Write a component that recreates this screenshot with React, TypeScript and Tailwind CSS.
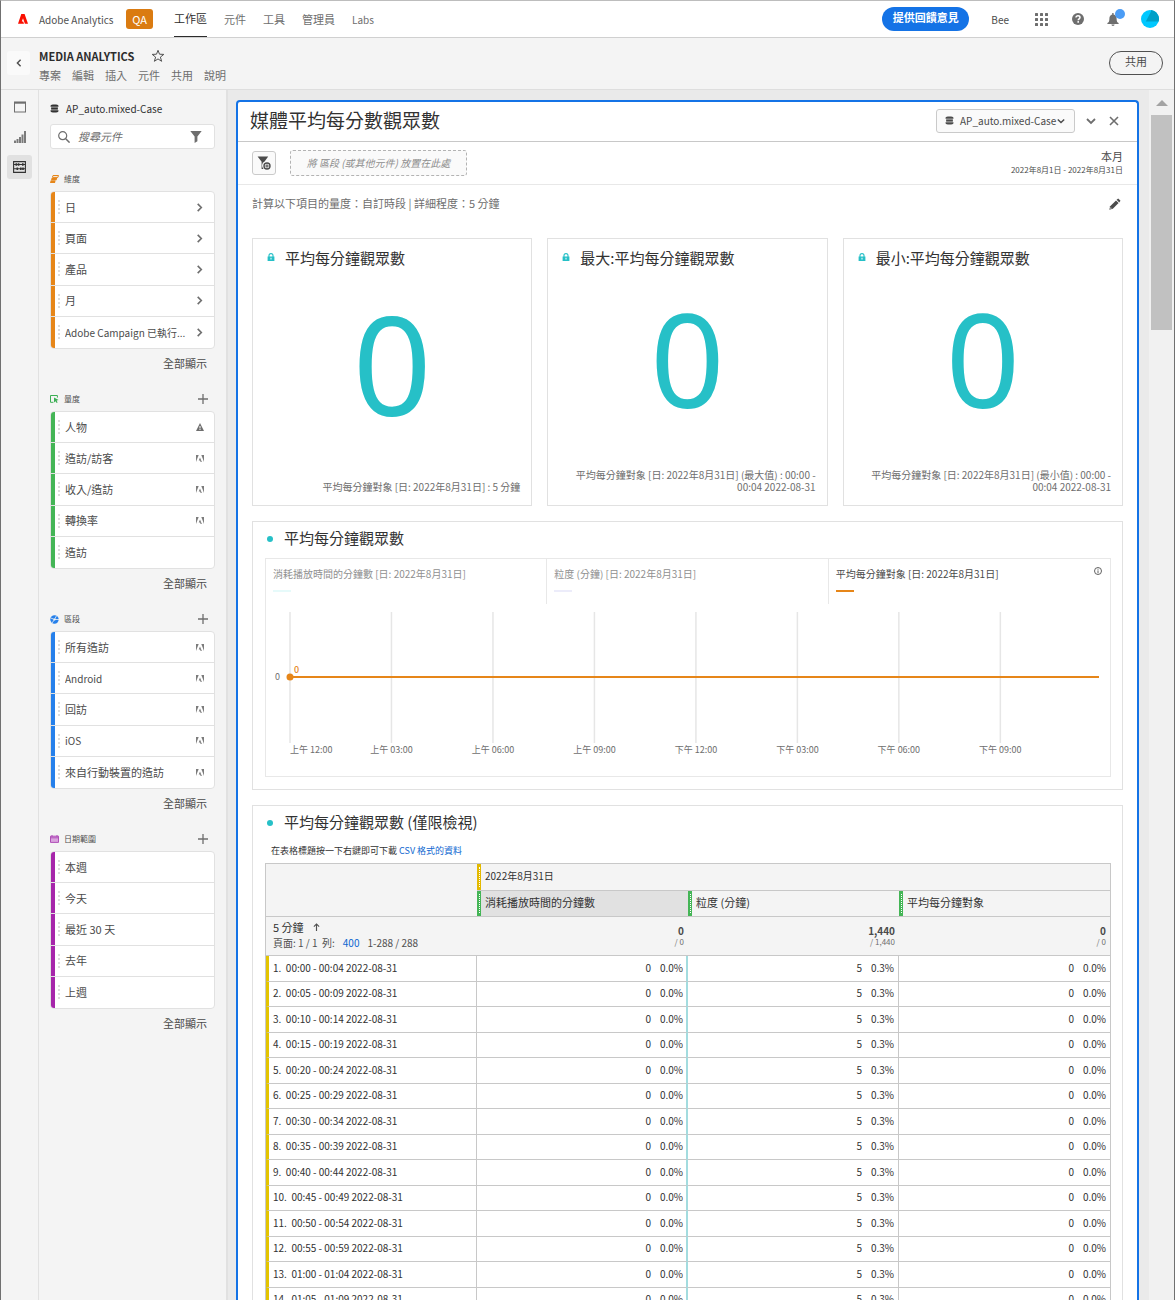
import React from 'react';

type IconProps = { className?: string };

const AdobeLetterLogo = ({ className = '' }: IconProps) => (
  <svg viewBox="0 0 20 20" className={className} fill="currentColor" aria-hidden="true">
    <path d="M6.6 0H13.2L20 19.6H13.8L10 8.6L7.6 15H10.4L12 19.6H0Z" />
  </svg>
);

const AdobeLogo = ({ className = '' }: IconProps) => (
  <svg viewBox="0 0 30 26" className={className} fill="currentColor" aria-hidden="true">
    <path d="M20 0H30V26Z" />
    <path d="M10 0H0V26Z" />
    <path d="M15 9.6L22 26H17.4L15.3 20.8H10.2Z" />
  </svg>
);

const Database = ({ className = '' }: IconProps) => (
  <svg viewBox="0 0 16 16" className={className} fill="currentColor" aria-hidden="true">
    <path d="M1 3C1 1.6 4 .8 8 .8s7 .8 7 2.2V5H1z" />
    <path d="M2 6h12v4H2z" />
    <path d="M1 11h14v2c0 1.4-3 2.2-7 2.2S1 14.4 1 13z" />
  </svg>
);

const ChevronRight = ({ className = '' }: IconProps) => (
  <svg viewBox="0 0 10 10" className={className} fill="none" stroke="currentColor" strokeWidth="1.8" aria-hidden="true">
    <path d="M3 1L7 5L3 9" />
  </svg>
);

const ChevronLeft = ({ className = '' }: IconProps) => (
  <svg viewBox="0 0 10 10" className={className} fill="none" stroke="currentColor" strokeWidth="1.8" aria-hidden="true">
    <path d="M7 1L3 5L7 9" />
  </svg>
);

const ChevronDown = ({ className = '' }: IconProps) => (
  <svg viewBox="0 0 10 10" className={className} fill="none" stroke="currentColor" strokeWidth="1.8" aria-hidden="true">
    <path d="M1 3L5 7L9 3" />
  </svg>
);

const Cross = ({ className = '' }: IconProps) => (
  <svg viewBox="0 0 10 10" className={className} fill="none" stroke="currentColor" strokeWidth="1.6" aria-hidden="true">
    <path d="M1 1L9 9M9 1L1 9" />
  </svg>
);

const Plus = ({ className = '' }: IconProps) => (
  <svg viewBox="0 0 10 10" className={className} fill="none" stroke="currentColor" strokeWidth="1.3" aria-hidden="true">
    <path d="M5 0V10M0 5H10" />
  </svg>
);

const Funnel = ({ className = '' }: IconProps) => (
  <svg viewBox="0 0 12 12" className={className} fill="currentColor" aria-hidden="true">
    <path d="M.3 0H11.7L7.4 5.4V10.2L4.6 12V5.4Z" />
  </svg>
);

const FunnelAdd = ({ className = '' }: IconProps) => (
  <svg viewBox="0 0 14 14" className={className} fill="currentColor" aria-hidden="true">
    <path d="M.6 .6H11.2L7.6 5.6A4.4 4.4 0 0 0 6.6 13L4.6 13V5.8Z" />
    <circle cx="10" cy="10" r="3" fill="none" stroke="currentColor" strokeWidth="1.4" />
    <path d="M9.5 8.2h1v1.3h1.3v1h-1.3v1.3h-1v-1.3H8.2v-1h1.3z" />
  </svg>
);

const Magnifier = ({ className = '' }: IconProps) => (
  <svg viewBox="0 0 12 12" className={className} fill="none" stroke="currentColor" strokeWidth="1.2" aria-hidden="true">
    <circle cx="4.7" cy="4.7" r="4" />
    <path d="M7.7 7.7L11.6 11.6" strokeWidth="1.5" />
  </svg>
);

const Star = ({ className = '' }: IconProps) => (
  <svg viewBox="0 0 14 14" className={className} fill="none" stroke="currentColor" strokeWidth="1" strokeLinejoin="miter" aria-hidden="true">
    <path d="M7 1.3L8.5 5.2L12.8 5.4L9.4 8.1L10.6 12.3L7 9.9L3.4 12.3L4.6 8.1L1.2 5.4L5.5 5.2Z" />
  </svg>
);

const Lock = ({ className = '' }: IconProps) => (
  <svg viewBox="0 0 8 8" className={className} aria-hidden="true">
    <path d="M2 4V2.6a2 2 0 0 1 4 0V4" fill="none" stroke="currentColor" strokeWidth="1.1" />
    <path d="M.6 3.4H7.4V8H.6zM3.5 4.7v1.8h1V4.7z" fill="currentColor" fillRule="evenodd" />
  </svg>
);

const Warning = ({ className = '' }: IconProps) => (
  <svg viewBox="0 0 8 8" className={className} fill="currentColor" aria-hidden="true">
    <path fillRule="evenodd" d="M4 0L8 8H0ZM3.5 3v2.4h1V3zM3.5 6v1h1V6z" />
  </svg>
);

const Bell = ({ className = '' }: IconProps) => (
  <svg viewBox="0 0 12 13" className={className} fill="currentColor" aria-hidden="true">
    <path d="M5.2 0h1.4v1.4C8.6 1.8 9.6 3.4 9.6 5.4c0 3 .6 3.8 2 4.6v1H.4v-1c1.4-.8 2-1.6 2-4.6 0-2 1-3.6 2.8-4z" />
    <path d="M4.4 11.6h3.2a1.6 1.4 0 0 1-3.2 0z" />
  </svg>
);

const Pencil = ({ className = '' }: IconProps) => (
  <svg viewBox="0 0 12 12" className={className} fill="currentColor" aria-hidden="true">
    <path d="M9.2.5L11.5 2.8L10.2 4.4L7.6 1.8Z" />
    <path d="M7 2.4L9.6 5L3.8 10.8L.3 11.7L1.2 8.2Z" />
    <path d="M1.7 9.2L2.8 10.3L1.2 10.8Z" fill="#fff" />
  </svg>
);

const Apps = ({ className = '' }: IconProps) => (
  <svg viewBox="0 0 13 13" className={className} fill="currentColor" aria-hidden="true">
    {[0, 5, 10].map((y) => [0, 5, 10].map((x) => <rect key={`${x}-${y}`} x={x} y={y} width="3" height="3" rx=".5" />))}
  </svg>
);

const Help = ({ className = '' }: IconProps) => (
  <svg viewBox="0 0 12 12" className={className} aria-hidden="true">
    <circle cx="6" cy="6" r="6" fill="currentColor" />
    <path d="M4 4.6C4 3.4 4.9 2.8 6 2.8s2 .6 2 1.7C8 5.8 6.2 5.8 6.2 7.2" fill="none" stroke="#fff" strokeWidth="1.5" />
    <rect x="5.4" y="8.1" width="1.6" height="1.6" fill="#fff" />
  </svg>
);

const PanelIcon = ({ className = '' }: IconProps) => (
  <svg viewBox="0 0 12 12" className={className} aria-hidden="true">
    <rect x=".5" y="1.2" width="11" height="9.8" fill="none" stroke="currentColor" />
    <rect x="0" y=".7" width="12" height="2" fill="currentColor" />
  </svg>
);

const Bars = ({ className = '' }: IconProps) => (
  <svg viewBox="0 0 12 12" className={className} fill="currentColor" aria-hidden="true">
    <path d="M0 9.5h2V12H0zM2.5 8h2v4h-2zM5 6h2v6H5zM7.5 3.5h2V12h-2zM10 0h2v12h-2z" />
  </svg>
);

const Abacus = ({ className = '' }: IconProps) => (
  <svg viewBox="0 0 13 12" className={className} aria-hidden="true">
    <path d="M.6.6H12.4V11.4H.6ZM.6 3.5H12.4M.6 7.7H12.4" fill="none" stroke="currentColor" strokeWidth="1.1" />
    <path d="M2.5 2.2h1.6v2.6H2.5zM4.8 2.2h1.6v2.6H4.8zM9 2.2h1.6v2.6H9zM3.5 6.4h1.6V9H3.5zM7 6.4h1.6V9H7zM9.2 6.4h1.6V9H9.2z" fill="currentColor" />
  </svg>
);

const DimensionIcon = ({ className = '' }: IconProps) => (
  <svg viewBox="0 0 9 8" className={className} aria-hidden="true">
    <path d="M3 .5H8.5L7.9 2.4H2.4Z" fill="none" stroke="currentColor" />
    <path d="M1.6 2.9H7.2L6.6 5.2H1ZM.6 5.6H5.6L5 8H0Z" fill="currentColor" />
  </svg>
);

const MetricIcon = ({ className = '' }: IconProps) => (
  <svg viewBox="0 0 9 8" className={className} aria-hidden="true">
    <path d="M7.4 2.6V.5H.5V7.3H3.4" fill="none" stroke="currentColor" />
    <path d="M4 2.4L8.6 5L6.6 5.6L7.6 7.4L6.6 8L5.6 6.2L4 7.6Z" fill="currentColor" />
  </svg>
);

const SegmentIcon = ({ className = '' }: IconProps) => (
  <svg viewBox="0 0 9 9" className={className} aria-hidden="true">
    <circle cx="4.5" cy="4.5" r="4.2" fill="currentColor" />
    <path d="M4.5 4.5L6.5 .8M4.5 4.5H9M4.5 4.5L2 8M4.5 4.5L.8 3" stroke="#f4f4f4" strokeWidth=".8" />
    <circle cx="4.5" cy="4.5" r="1.1" fill="#f4f4f4" />
  </svg>
);

const DateIcon = ({ className = '' }: IconProps) => (
  <svg viewBox="0 0 9 8" className={className} aria-hidden="true">
    <path d="M.5 1.2H8.5V7.4H.5Z" fill="#d9a3dd" stroke="currentColor" />
    <path d="M2 0V2M7 0V2M.5 2.8H8.5" stroke="currentColor" />
  </svg>
);

const Info = ({ className = '' }: IconProps) => (
  <svg viewBox="0 0 8 8" className={className} aria-hidden="true">
    <circle cx="4" cy="4" r="3.5" fill="none" stroke="currentColor" strokeWidth=".9" />
    <path d="M4 1.8V2.7M4 3.4V6.2" stroke="currentColor" strokeWidth=".9" />
  </svg>
);

type RowIcon = 'chevron' | 'adobe' | 'warning' | 'none';
type Item = { label: string; icon: RowIcon; latin?: boolean };
type Section = {
  title: string;
  icon: React.ReactNode;
  bar: string;
  addable: boolean;
  items: Item[];
};

const sections: Section[] = [
  {
    title: '維度',
    icon: <DimensionIcon className="h-2 w-[9px] text-[#e68619]" />,
    bar: 'bg-[#e68619]',
    addable: false,
    items: [
      { label: '日', icon: 'chevron' },
      { label: '頁面', icon: 'chevron' },
      { label: '產品', icon: 'chevron' },
      { label: '月', icon: 'chevron' },
      { label: 'Adobe Campaign 已執行...', icon: 'chevron', latin: true },
    ],
  },
  {
    title: '量度',
    icon: <MetricIcon className="h-2 w-[9px] text-[#3bae53]" />,
    bar: 'bg-[#44b556]',
    addable: true,
    items: [
      { label: '人物', icon: 'warning' },
      { label: '造訪/訪客', icon: 'adobe' },
      { label: '收入/造訪', icon: 'adobe' },
      { label: '轉換率', icon: 'adobe' },
      { label: '造訪', icon: 'none' },
    ],
  },
  {
    title: '區段',
    icon: <SegmentIcon className="h-[9px] w-[9px] text-[#2680eb]" />,
    bar: 'bg-[#2680eb]',
    addable: true,
    items: [
      { label: '所有造訪', icon: 'adobe' },
      { label: 'Android', icon: 'adobe', latin: true },
      { label: '回訪', icon: 'adobe' },
      { label: 'iOS', icon: 'adobe', latin: true },
      { label: '來自行動裝置的造訪', icon: 'adobe' },
    ],
  },
  {
    title: '日期範圍',
    icon: <DateIcon className="h-2 w-[9px] text-[#b04fb8]" />,
    bar: 'bg-[#a626aa]',
    addable: true,
    items: [
      { label: '本週', icon: 'none' },
      { label: '今天', icon: 'none' },
      { label: '最近 30 天', icon: 'none' },
      { label: '去年', icon: 'none' },
      { label: '上週', icon: 'none' },
    ],
  },
];

const RowMark = ({ kind }: { kind: RowIcon }) => {
  if (kind === 'chevron') return <ChevronRight className="h-[9px] w-[9px] shrink-0 text-[#6e6e6e]" />;
  if (kind === 'adobe') return <AdobeLogo className="h-[7px] w-2 shrink-0 text-[#7c7c7c]" />;
  if (kind === 'warning') return <Warning className="h-2 w-2 shrink-0 text-[#6e6e6e]" />;
  return null;
};

const ComponentSection = ({ section }: { section: Section }) => (
  <section className="h-[220px]">
    <div className="flex h-6 items-center">
      {section.icon}
      <h3 className="ml-[5px] flex-1 text-[8px] text-[#505050]">{section.title}</h3>
      {section.addable && (
        <button type="button" aria-label={`新增${section.title}`} className="mr-[7px]">
          <Plus className="h-[10px] w-[10px] text-[#6e6e6e]" />
        </button>
      )}
    </div>
    <ul className="grid h-[158px] auto-rows-fr divide-y divide-[#e1e1e1] overflow-hidden rounded-sm border border-[#e1e1e1] bg-white">
      {section.items.map((item) => (
        <li key={item.label} className="flex items-stretch">
          <span className={`w-1 ${section.bar}`} />
          <button type="button" className="flex min-w-0 flex-1 items-center pr-[10px] text-left text-[#4b4b4b]">
            <span className="ml-[3px] h-[14px] border-l-2 border-dotted border-[#dcdcdc]" />
            <span className={item.latin ? 'ml-[5px] flex-1 truncate text-[10px]' : 'ml-[5px] flex-1 truncate text-[11px]'}>{item.label}</span>
            <RowMark kind={item.icon} />
          </button>
        </li>
      ))}
    </ul>
    <div className="flex h-7 items-center justify-end pr-2">
      <button type="button" className="text-[11px] text-[#4b4b4b]">全部顯示</button>
    </div>
  </section>
);

const TopBar = () => (
  <header className="flex h-[37px] shrink-0 items-center border-b border-[#d0d0d0] bg-white pr-[15px] pl-[17px] text-[11px] text-[#6e6e6e]">
    <AdobeLetterLogo className="h-[10px] w-[10px] text-[#fa0f00]" />
    <span className="ml-[11px] w-[75px] text-[10px] whitespace-nowrap text-[#505050]">Adobe Analytics</span>
    <span className="ml-3 flex h-5 w-[27px] items-center justify-center rounded-[3px] bg-[#da7b11] text-[11px] text-white">QA</span>
    <nav className="ml-[21px] flex h-full items-stretch gap-[17px]">
      <a href="#workspace" className="flex items-center border-b border-[#2c2c2c] text-[#2c2c2c]">工作區</a>
      <a href="#components" className="flex items-center">元件</a>
      <a href="#tools" className="flex items-center">工具</a>
      <a href="#admin" className="flex items-center">管理員</a>
      <a href="#labs" className="flex items-center text-[10px]">Labs</a>
    </nav>
    <button type="button" className="ml-auto flex h-6 w-[87px] items-center justify-center rounded-full bg-[#1473e6] pb-1 text-[11px] font-bold text-white">
      提供回饋意見
    </button>
    <span className="ml-[22px] text-[10px] text-[#4b4b4b]">Bee</span>
    <button type="button" aria-label="應用程式" className="ml-[26px]"><Apps className="h-[13px] w-[13px]" /></button>
    <button type="button" aria-label="說明" className="ml-6"><Help className="h-3 w-3" /></button>
    <button type="button" aria-label="通知" className="relative ml-[23px]">
      <Bell className="h-[13px] w-3" />
      <span className="absolute -top-1 left-2 h-[10px] w-[10px] rounded-full bg-[#4b9cf5]" />
    </button>
    <button type="button" aria-label="個人資料" className="ml-[22px]">
      <svg viewBox="0 0 18 18" className="h-[18px] w-[18px]" aria-hidden="true">
        <circle cx="9" cy="9" r="9" fill="#00c8ff" />
        <path d="M10 1.4L4.8 11.4H17.7A9 9 0 0 0 10 .1Z" fill="#00a0c8" />
      </svg>
    </button>
  </header>
);

const ProjectBar = () => (
  <div className="flex h-[52px] shrink-0 items-start border-b border-[#dedede] bg-[#f4f4f4]">
    <button type="button" aria-label="返回" className="mt-[13px] ml-[6px] flex h-6 w-[23px] items-center justify-center rounded-[3px] bg-[#fafafa]">
      <ChevronLeft className="h-2 w-2 text-[#505050]" />
    </button>
    <div className="ml-[9px] pt-[10px]">
      <div className="flex h-4 items-center">
        <h1 className="text-[11px] font-bold text-[#2c2c2c]">MEDIA ANALYTICS</h1>
        <button type="button" aria-label="加到我的最愛" className="ml-[17px]"><Star className="h-[14px] w-[14px] text-[#505050]" /></button>
      </div>
      <nav className="mt-[3px] flex h-4 items-center gap-[11px] text-[11px] text-[#6e6e6e]">
        {['專案', '編輯', '插入', '元件', '共用', '說明'].map((m) => (
          <button key={m} type="button">{m}</button>
        ))}
      </nav>
    </div>
    <button type="button" className="mt-[13px] mr-[11px] ml-auto flex h-6 w-[54px] items-center justify-center rounded-full border border-[#505050] pb-[3px] text-[11px] text-[#4b4b4b]">
      共用
    </button>
  </div>
);

const Rail = () => (
  <aside className="flex w-[38px] shrink-0 flex-col items-center gap-[6px] border-r border-[#e1e1e1] bg-[#f4f4f4] pt-[5px]">
    <button type="button" aria-label="面板" className="flex h-6 w-[25px] items-center justify-center rounded-[3px]">
      <PanelIcon className="h-3 w-3 text-[#6e6e6e]" />
    </button>
    <button type="button" aria-label="視覺效果" className="flex h-6 w-[25px] items-center justify-center rounded-[3px]">
      <Bars className="h-3 w-3 text-[#7a7a7a]" />
    </button>
    <button type="button" aria-label="元件" className="flex h-6 w-[25px] items-center justify-center rounded-[3px] bg-[#e1e1e1]">
      <Abacus className="h-3 w-[13px] text-[#323232]" />
    </button>
  </aside>
);

const Sidebar = () => (
  <aside className="w-[189px] shrink-0 border-r-2 border-[#e1e1e1] bg-[#f4f4f4] px-[11px]">
    <div className="flex h-[34px] items-center pt-[3px] text-[10px] text-[#323232]">
      <Database className="h-[9px] w-[9px]" />
      <span className="ml-[7px]">AP_auto.mixed-Case</span>
    </div>
    <div className="mb-[18px] flex h-[25px] items-center rounded-[3px] border border-[#e1e1e1] bg-white pr-3 pl-[7px]">
      <Magnifier className="h-3 w-3 text-[#6e6e6e]" />
      <input
        type="search"
        aria-label="搜尋元件"
        placeholder="搜尋元件"
        className="ml-2 min-w-0 flex-1 bg-transparent text-[11px] italic outline-none placeholder:text-[#6e6e6e]"
      />
      <button type="button" aria-label="篩選"><Funnel className="h-3 w-3 text-[#6e6e6e]" /></button>
    </div>
    {sections.map((s) => (
      <ComponentSection key={s.title} section={s} />
    ))}
  </aside>
);

const SummaryCard = ({ title, caption, big }: { title: string; caption: React.ReactNode; big: boolean }) => (
  <article className="flex h-[268px] flex-col border border-[#e1e1e1]">
    <div className="flex h-[38px] items-center pl-[14px]">
      <Lock className="mb-[2px] h-2 w-2 text-[#26c0c7]" />
      <h3 className="ml-[10px] text-[15px] text-[#323232]">{title}</h3>
    </div>
    <div
      className={
        big
          ? "flex h-[170px] items-center justify-center font-['Noto_Sans',sans-serif] text-[138px] leading-none text-[#26c0c7]"
          : "flex h-[162px] items-center justify-center font-['Noto_Sans',sans-serif] text-[130px] leading-none text-[#26c0c7]"
      }
    >
      0
    </div>
    <p className="mt-auto pr-[11px] pb-3 pl-5 text-right text-[10px] leading-3 text-[#6e6e6e]">{caption}</p>
  </article>
);

const hours = ['上午 12:00', '上午 03:00', '上午 06:00', '上午 09:00', '下午 12:00', '下午 03:00', '下午 06:00', '下午 09:00'];

const legends = [
  { label: '消耗播放時間的分鐘數 [日: 2022年8月31日]', swatch: 'bg-[#e6fafa]', text: 'text-[#909090]' },
  { label: '粒度 (分鐘) [日: 2022年8月31日]', swatch: 'bg-[#ececfa]', text: 'text-[#909090]' },
  { label: '平均每分鐘對象 [日: 2022年8月31日]', swatch: 'bg-[#e68619]', text: 'text-[#4b4b4b]' },
];

const CardHeading = ({ children }: { children: React.ReactNode }) => (
  <div className="flex h-9 items-center pb-[3px] pl-[14px]">
    <span className="h-[6px] w-[6px] rounded-full bg-[#26c0c7]" />
    <h3 className="ml-[11px] text-[15px] text-[#323232]">{children}</h3>
  </div>
);

const ChartCard = () => (
  <article className="mt-[15px] border border-[#e1e1e1] pb-3">
    <CardHeading>平均每分鐘觀眾數</CardHeading>
    <div className="mr-[11px] ml-3 h-[219px] border border-[#e8e8e8]">
      <div className="grid h-[45px] grid-cols-3 divide-x divide-[#e8e8e8]">
        {legends.map((l, i) => (
          <div key={l.label} className="flex items-start justify-between pr-2 pl-[7px]">
            <button type="button" className={`pt-[7px] text-left text-[10px] leading-4 ${l.text}`}>
              {l.label}
              <span className={`mt-2 block h-[2px] w-[18px] ${l.swatch}`} />
            </button>
            {i === 2 && <Info className="mt-2 h-2 w-2 text-[#505050]" />}
          </div>
        ))}
      </div>
      <div className="pt-2 pr-[11px] pl-6">
        <svg width="100%" height="148" className="block overflow-visible" role="img" aria-label="平均每分鐘觀眾數">
          {hours.map((h, i) => {
            const x = `${((i * 180) / 1435) * 100}%`;
            return (
              <g key={h}>
                <line x1={x} x2={x} y1="0" y2="131" stroke="#e6e6e6" strokeWidth="1.5" />
                <text x={x} y="141" textAnchor={i === 0 ? 'start' : 'middle'} fontSize="9" fill="#6e6e6e">{h}</text>
              </g>
            );
          })}
          <line x1="0" x2="100%" y1="65" y2="65" stroke="#e68619" strokeWidth="2" />
          <circle cx="0" cy="65" r="3.5" fill="#e68619" />
          <text x="-10" y="68" textAnchor="end" fontSize="9" fill="#6e6e6e">0</text>
          <text x="4" y="61" fontSize="9" fontWeight="500" fill="#e68619">0</text>
        </svg>
      </div>
    </div>
  </article>
);

const slots = Array.from({ length: 16 }, (_, i) => {
  const stamp = (m: number) => `${String(Math.floor(m / 60)).padStart(2, '0')}:${String(m % 60).padStart(2, '0')}`;
  return `${stamp(i * 5)} - ${stamp(i * 5 + 4)} 2022-08-31`;
});

const pairEdges = {
  teal: 'border-r-2 border-b border-[#c8c8c8] border-r-[#a3dcdf] p-0 pr-[3px] pb-[2px]',
  gray: 'border-r border-b border-[#c8c8c8] p-0 pr-1 pb-[2px]',
  none: 'border-b border-[#c8c8c8] p-0 pr-1 pb-[2px]',
};

const Pair = ({ value, pct, edge }: { value: string; pct: string; edge: keyof typeof pairEdges }) => (
  <td className={pairEdges[edge]}>
    <div className="flex justify-end">
      <span>{value}</span>
      <span className="w-8 text-right">{pct}</span>
    </div>
  </td>
);

const ColumnHead = ({ children, tone, active = false }: { children: React.ReactNode; tone: string; active?: boolean }) => (
  <div className={active ? 'flex h-full items-stretch bg-[#e1e1e1]' : 'flex h-full items-stretch'}>
    <span className={`flex w-1 justify-center ${tone}`}>
      <span className="my-[3px] border-l border-dotted border-white" />
    </span>
    <span className="flex items-center pb-[3px] pl-1">{children}</span>
  </div>
);

const Total = ({ value }: { value: string }) => (
  <td className="border-b border-[#c8c8c8] p-0 pr-1 text-right align-middle">
    <div className="leading-3 font-bold text-[#4b4b4b]">{value}</div>
    <div className="text-[8px] leading-[10px] text-[#6e6e6e]">/ {value}</div>
  </td>
);

const TableCard = () => (
  <article className="mt-[15px] border border-[#e1e1e1] pb-3">
    <CardHeading>平均每分鐘觀眾數 (僅限檢視)</CardHeading>
    <p className="flex h-[21px] items-center pb-1 pl-[18px] text-[9px] text-[#323232]">
      在表格標題按一下右鍵即可下載&nbsp;<a href="#csv" className="text-[#0d66d0]">CSV 格式的資料</a>
    </p>
    <div className="mr-[11px] ml-3">
      <table className="w-full table-fixed border-separate border-spacing-0 border border-[#c8c8c8] text-[10px] leading-3 text-[#323232]">
        <thead className="bg-[#f4f4f4] text-left">
          <tr className="h-[27px]">
            <th rowSpan={2} className="border-b border-[#c8c8c8] p-0" aria-label="時段" />
            <th colSpan={3} className="h-[27px] border-b border-[#c8c8c8] p-0 text-[10px] font-normal">
              <ColumnHead tone="bg-[#e3b900]">2022年8月31日</ColumnHead>
            </th>
          </tr>
          <tr className="h-[26px] text-[11px]">
            <th className="h-[26px] border-b border-[#c8c8c8] p-0 font-normal"><ColumnHead tone="bg-[#44b556]" active>消耗播放時間的分鐘數</ColumnHead></th>
            <th className="h-[26px] border-b border-[#c8c8c8] p-0 font-normal"><ColumnHead tone="bg-[#44b556]">粒度 (分鐘)</ColumnHead></th>
            <th className="h-[26px] border-b border-[#c8c8c8] p-0 font-normal"><ColumnHead tone="bg-[#44b556]">平均每分鐘對象</ColumnHead></th>
          </tr>
          <tr className="h-[39px] bg-[#f4f4f4]">
            <td className="border-b border-[#c8c8c8] p-0 pb-[3px] pl-[7px]">
              <div className="flex items-center gap-[9px] text-[11px] leading-4">
                <span>5 分鐘</span>
                <svg viewBox="0 0 8 9" className="h-2 w-[7px]" fill="none" stroke="#505050" strokeWidth="1.3" aria-hidden="true"><path d="M4 9V1M1 4L4 1L7 4" /></svg>
              </div>
              <div className="flex gap-2 leading-4 whitespace-nowrap text-[#505050]">
                <span>頁面: 1 / 1&nbsp; 列:</span>
                <a href="#rows" className="text-[#0d66d0]">400</a>
                <span>1-288 / 288</span>
              </div>
            </td>
            <Total value="0" />
            <Total value="1,440" />
            <Total value="0" />
          </tr>
        </thead>
        <tbody>
          {slots.map((slot, i) => (
            <tr key={slot} className="odd:h-[26px] even:h-[25px]">
              <td className="border-r border-b border-l-[3px] border-[#c8c8c8] border-l-[#e3c400] p-0 pb-[2px] pl-1">
                {i + 1}.&nbsp; {slot}
              </td>
              <Pair value="0" pct="0.0%" edge="teal" />
              <Pair value="5" pct="0.3%" edge="gray" />
              <Pair value="0" pct="0.0%" edge="none" />
            </tr>
          ))}
        </tbody>
      </table>
    </div>
  </article>
);

const Panel = () => (
  <section className="rounded-t border-2 border-b-0 border-[#1473e6] bg-white">
    <div className="flex h-10 items-center border-b border-[#c8c8c8] pr-[18px] pb-[2px] pl-3">
      <h2 className="flex-1 text-[19px] text-[#323232]">媒體平均每分數觀眾數</h2>
      <button type="button" className="flex h-6 w-[139px] items-center rounded-[3px] border border-[#cacaca] bg-[#fafafa] pl-2 text-[10px] whitespace-nowrap text-[#4b4b4b]">
        <Database className="h-[9px] w-[9px] shrink-0" />
        <span className="ml-[6px]">AP_auto.mixed-Case</span>
        <ChevronDown className="mr-[9px] ml-auto h-2 w-2 shrink-0" />
      </button>
      <button type="button" aria-label="收合" className="ml-[11px]"><ChevronDown className="h-[10px] w-[10px] text-[#6e6e6e]" /></button>
      <button type="button" aria-label="關閉" className="ml-[13px]"><Cross className="h-[10px] w-[10px] text-[#6e6e6e]" /></button>
    </div>
    <div className="flex h-[43px] items-center border-b border-[#e8e8e8] px-[14px]">
      <button type="button" aria-label="新增篩選" className="flex h-6 w-6 items-center justify-center rounded-[3px] border border-[#cacaca] bg-[#fafafa]">
        <FunnelAdd className="h-[14px] w-[14px] text-[#4b4b4b]" />
      </button>
      <div className="ml-[14px] flex h-[26px] w-[177px] items-center justify-center rounded-[3px] border border-dashed border-[#b3b3b3] bg-[#fafafa] pb-[2px] text-[10px] text-[#8e8e8e] italic">
        將 區段 (或其他元件) 放置在此處
      </div>
      <button type="button" className="ml-auto text-right text-[#4b4b4b]">
        <span className="block text-[11px] leading-[14px]">本月</span>
        <span className="block text-[8px] leading-[14px]">2022年8月1日 - 2022年8月31日</span>
      </button>
    </div>
    <div className="px-[14px] pb-4">
      <div className="flex h-[53px] items-start justify-between pt-[10px] pr-[2px] text-[11px] text-[#6e6e6e]">
        <p className="leading-4">計算以下項目的量度：自訂時段 | 詳細程度：5 分鐘</p>
        <button type="button" aria-label="編輯" className="pt-[3px]"><Pencil className="h-3 w-3 text-[#4b4b4b]" /></button>
      </div>
      <div className="grid grid-cols-3 gap-[15px]">
        <SummaryCard big title="平均每分鐘觀眾數" caption="平均每分鐘對象 [日: 2022年8月31日] : 5 分鐘" />
        <SummaryCard big={false} title="最大:平均每分鐘觀眾數" caption={<>平均每分鐘對象 [日: 2022年8月31日] (最大值) : 00:00 -<br />00:04 2022-08-31</>} />
        <SummaryCard big={false} title="最小:平均每分鐘觀眾數" caption={<>平均每分鐘對象 [日: 2022年8月31日] (最小值) : 00:00 -<br />00:04 2022-08-31</>} />
      </div>
      <ChartCard />
      <TableCard />
    </div>
  </section>
);

const Scrollbar = () => (
  <div className="flex w-[25px] shrink-0 flex-col items-center bg-[#f1f1f1] pt-[10px]" aria-hidden="true">
    <svg viewBox="0 0 12 6" className="h-[6px] w-3" fill="#a3a3a3"><path d="M0 6L6 0L12 6Z" /></svg>
    <span className="mt-[9px] h-[215px] w-[21px] bg-[#c1c1c1]" />
  </div>
);

export default function App() {
  return (
    <div className="flex h-screen flex-col overflow-hidden border-x border-t border-x-[#707070] border-t-[#bdbdbd] bg-[#eaeaea] font-['Noto_Sans_CJK_TC',sans-serif]">
      <TopBar />
      <ProjectBar />
      <div className="flex min-h-0 flex-1">
        <Rail />
        <Sidebar />
        <main className="min-w-0 flex-1 overflow-hidden pt-[10px] pr-[10px] pl-2">
          <Panel />
        </main>
        <Scrollbar />
      </div>
    </div>
  );
}
